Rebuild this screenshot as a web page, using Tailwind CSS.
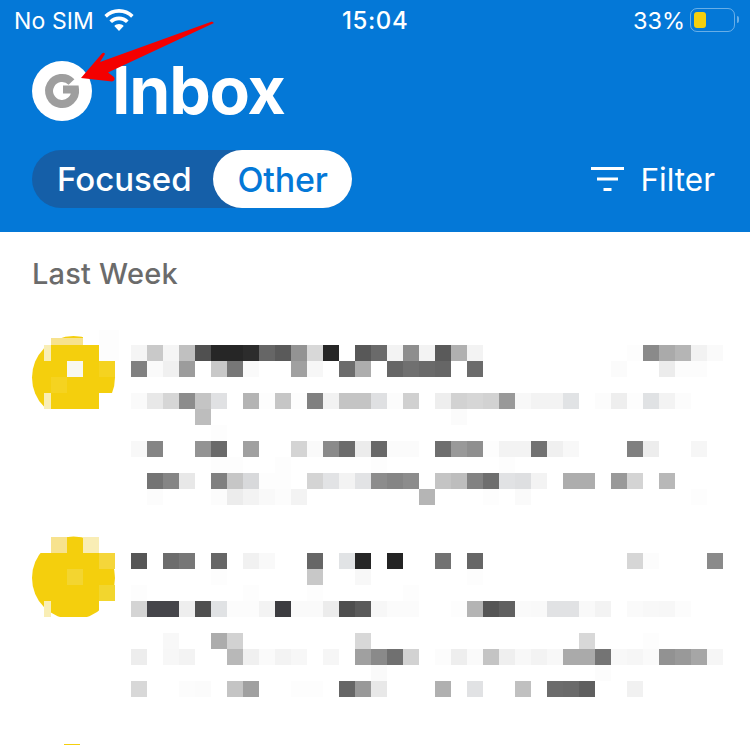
<!doctype html>
<html lang="en">
<head>
<meta charset="utf-8">
<script src="https://cdn.jsdelivr.net/npm/@tailwindcss/browser@4"></script>
<title>Inbox</title>
</head>
<body class="bg-white">
<div class="relative w-[750px] h-[745px] overflow-hidden bg-white font-['Inter','Liberation_Sans',sans-serif]">
  <header class="h-[232px] bg-[#0478d7] text-white flex flex-col">
    <div class="h-[42px] relative flex items-center justify-between pl-[14px] pr-[15px]">
      <div class="flex items-center gap-[10px]">
        <span class="text-[23px] leading-[42px] tracking-[0.1px]">No SIM</span>
        <svg width="30" height="23" viewBox="0 0 30 23" fill="white" class="-mt-[2px]">
          <path d="M15 0C9.300 0 4.200 2.300.4 6l2.500 2.700C6 5.600 10.300 3.800 15 3.800s9 1.800 12.100 4.900L29.600 6C25.800 2.300 20.700 0 15 0z"/>
          <path d="M15 7.500c-3.700 0-7.100 1.500-9.600 3.900l2.600 2.700c1.800-1.800 4.300-2.900 7-2.900s5.200 1.100 7 2.900l2.600-2.700c-2.500-2.400-5.900-3.900-9.600-3.900z"/>
          <path d="M15 15c-1.800 0-3.500.7-4.700 1.900L15 22l4.700-5.100C18.500 15.700 16.800 15 15 15z"/>
        </svg>
      </div>
      <span class="absolute left-[342px] top-0 text-[24px] leading-[42px] font-medium tracking-[0.6px]">15:04</span>
      <div class="flex items-center gap-[5px]">
        <span class="text-[23.500px] leading-[42px]">33%</span>
        <div class="w-[45px] h-[24px] rounded-[7px] border-[1.5px] border-white/40 p-[3px] -mt-[2px] relative">
          <div class="w-[12px] h-full rounded-[3px] bg-[#f4cf0d]"></div>
          <div class="absolute -right-[5px] top-[7px] w-[2px] h-[7px] rounded-r-sm bg-white/40"></div>
        </div>
      </div>
    </div>
    <div class="h-[79px] pl-[32px] flex items-start gap-[20px] pt-[19px]">
      <svg width="60" height="60" viewBox="0 0 60 60" class="shrink-0">
        <circle cx="30" cy="30" r="30" fill="white"/>
        <path d="M39.500 21A13 13 0 1 0 43 28.500H31" fill="none" stroke="#9e9e9e" stroke-width="8"/>
      </svg>
      <h1 class="text-[66px] leading-[60px] font-bold tracking-[-1.200px] -mt-[1px]">Inbox</h1>
    </div>
    <div class="flex items-center justify-between pl-[32px] pr-[35px] mt-[29px]">
      <div class="h-[58px] w-[320px] rounded-full bg-[#155fa8] flex items-center text-[33px] font-medium">
        <span class="w-[181px] pl-[25px] pt-[1px]">Focused</span>
        <span class="w-[139px] h-[58px] rounded-full bg-white text-[#0478d7] flex items-center justify-center text-[34px] tracking-[-0.2px]">Other</span>
      </div>
      <div class="flex items-center gap-[16px]">
        <svg width="33" height="24" viewBox="0 0 33 24" fill="white">
          <rect x="0" y="0" width="33" height="3"/>
          <rect x="6" y="10.500" width="21" height="3"/>
          <rect x="12.500" y="21" width="8" height="3"/>
        </svg>
        <span class="text-[31.500px] pt-[1px]">Filter</span>
      </div>
    </div>
  </header>
  <main>
    <div class="h-[97px] pl-[32px] pt-[25px]">
      <h2 class="text-[29px] leading-[34px] font-medium text-[#6b6b6b] tracking-[0.2px]">Last Week</h2>
    </div>
    <svg id="mosaic" width="750" height="416" viewBox="0 329 750 416" class="block">
      <circle cx="73.500" cy="377.500" r="41.500" fill="#f4cf0d"/>
      <rect x="0" y="409" width="130" height="20" fill="white"/>
      <rect x="99" y="330" width="20" height="31" fill="#fdfdfd"/>
      <rect x="99" y="393" width="20" height="16" fill="white"/>
      <rect x="83" y="330" width="16" height="15" fill="white"/>
      <rect x="30" y="330" width="21" height="15" fill="white"/>
      <rect x="51" y="338" width="32" height="7" fill="#f7e28e"/>
      <rect x="44" y="345" width="7" height="16" fill="#f9eeb5"/>
      <rect x="44" y="393" width="7" height="16" fill="#f9eeb5"/>
      <rect x="67" y="361" width="16" height="16" fill="#f8f8f0"/>
      <rect x="51" y="377" width="16" height="16" fill="#f5d320"/>
      <rect x="99" y="361" width="16" height="16" fill="#f5d320"/>

      <circle cx="73.500" cy="578" r="41.500" fill="#f4cf0d"/>
      <rect x="0" y="617" width="130" height="25" fill="white"/>
      <rect x="30" y="530" width="21" height="23" fill="white"/>
      <rect x="99" y="530" width="20" height="23" fill="white"/>
      <rect x="99" y="601" width="20" height="16" fill="white"/>
      <rect x="51" y="537" width="16" height="16" fill="#f7e28e"/>
      <rect x="83" y="537" width="16" height="16" fill="#f9edb5"/>
      <rect x="99" y="553" width="16" height="16" fill="#f5d63a"/>
      <rect x="67" y="569" width="16" height="16" fill="#f3d530"/>
      <rect x="99" y="585" width="16" height="16" fill="#f2d62e"/>
      <rect x="44" y="601" width="7" height="16" fill="#f9eeb5"/>
      <rect x="64" y="744" width="16" height="1" fill="#f4cf0d"/>
    </svg>
  </main>
  <svg class="absolute left-0 top-0 pointer-events-none" width="750" height="120" viewBox="0 0 750 120">
    <path d="M81 78L102 53.500Q104 52 105 54L100 62L212 21.500L214 23L108 72.500L114 77Q116 80 112 81.500L81 78Z" fill="#f40000"/>
  </svg>
</div>
<script>
const rows = {
345:"0:f5 1:c9 2:f5 3:c0 4:50 5:26 6:26 7:2c 8:66 9:5a 10:93 11:d8 12:26 14:58 15:6a 16:f3 17:8e 18:f3 19:5a 20:b0 21:f3 31:fd 32:8a 33:aa 34:b5 35:f2 36:fa",
361:"0:80 1:fa 2:f0 3:9c 5:c8 6:77 7:fa 10:a0 11:f7 13:6c 14:ad 16:66 17:70 18:6a 19:66 21:6b 30:fb 33:ec 34:fc 35:fc",
393:"0:fa 1:e8 2:d6 3:8c 4:c4 5:e0e1e3 7:b4 8:fd 9:c6 10:fd 11:80 12:f2 13:c4 14:c4 15:dfe0e2 16:fc 17:d0 19:ee 20:d2 21:d6 22:d2 23:99 24:f8 25:f3 26:f3 27:e1e3e5 29:fc 30:ee 31:fd 32:e0e2e4 33:f3 34:fc",
409:"4:bd 20:fb",
425:"5:fd",
441:"0:f8 1:85 4:93 5:6a 7:a0 10:d4 11:fa 12:8a 13:6c 14:ec 15:68 16:fb 17:fb 19:6e 20:99 21:8f 22:fd 23:f3 24:f3 25:71 26:f0 27:f8 31:80 32:ed 35:f6",
457:"5:fd 6:fd 9:fd 15:fd 23:fd",
473:"1:74 2:85 3:e8 5:80 6:c6 7:d8d9db 8:fd 9:fd 11:d4 12:e2e3e5 13:f3 14:e2e3e5 15:8c 16:85 17:8c 19:c4 20:bd 21:82 22:6e 23:e1e2e4 24:dedfe1 25:f3 27:ad 28:ad 30:99 31:d4 33:b8",
489:"1:fc 5:fc 6:ec 7:f3 8:f9 9:fc 10:f3 18:b5 22:fd 24:fa 35:fd",
553:"0:56 2:6c 3:77 5:66 7:f1 8:f9 11:66 13:e1e3e5 14:26 16:24 19:72 21:66 31:d6 32:fc 36:8a",
569:"5:fd 11:c8 14:f8 21:fd",
585:"0:fd 7:fd 11:fd 17:fd",
601:"0:d4 1:45454a 2:45454a 3:ee 4:4f 5:e0e2e4 6:fc 7:fc 8:f3 9:3c3c40 10:fa 11:fa 12:ec 13:4e 14:5a 15:f7 16:fb 17:fb 20:fd 21:b4 22:55 23:60 24:fa 25:f9 26:e1e2e4 27:e1e2e4 28:f9 29:f3 31:fa 32:f8 33:f7 34:fc",
633:"2:f8 5:ac 6:d2 14:d8 28:d8 32:fd",
649:"0:ed 2:f7 3:f3 6:b8 7:f0 8:fa 9:f3 10:f7 12:f6 14:a0 15:8a 16:70 17:d2 19:fc 20:ee 21:fa 22:c4 23:ef 24:f8 25:f3 26:f8 27:aa 28:aa 29:74 30:f8 31:f6 32:fa 33:92 34:99 35:a6 36:f6",
665:"15:fa 29:fc",
681:"0:d8 3:fc 4:fb 6:c4 7:a0 10:fd 11:fd 13:66 14:99 15:e8 19:b0 21:e1e2e4 24:c0 26:6c 27:6a 28:5f 31:f1"
};
const svg = document.getElementById("mosaic");
for (const y in rows) {
  for (const cell of rows[y].split(" ")) {
    const [col, hex] = cell.split(":");
    const r = document.createElementNS("http://www.w3.org/2000/svg", "rect");
    r.setAttribute("x", 131 + 16 * col);
    r.setAttribute("y", y);
    r.setAttribute("width", 16);
    r.setAttribute("height", 16);
    r.setAttribute("fill", "#" + (hex.length === 2 ? hex + hex + hex : hex));
    svg.appendChild(r);
  }
}
</script>
</body>
</html>
